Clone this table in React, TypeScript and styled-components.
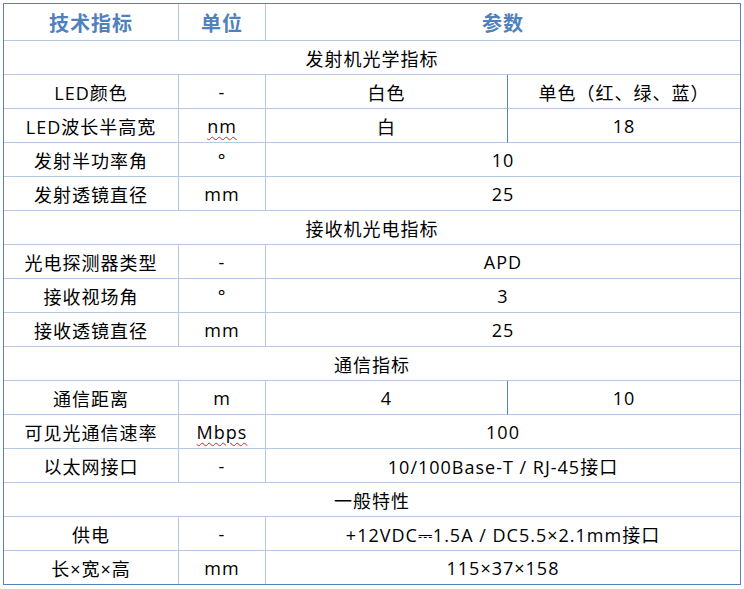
import styled, { createGlobalStyle } from "styled-components"

const GlobalStyle = createGlobalStyle`
  html, body {
    margin: 0;
    padding: 0;
    background: #fff;
  }
`

type Row =
  | { section: string }
  | { name: string; unit: string; values: string[]; spell?: boolean }

const rows: Row[] = [
  { section: "发射机光学指标" },
  { name: "LED颜色", unit: "-", values: ["白色", "单色（红、绿、蓝）"] },
  { name: "LED波长半高宽", unit: "nm", values: ["白", "18"], spell: true },
  { name: "发射半功率角", unit: "°", values: ["10"] },
  { name: "发射透镜直径", unit: "mm", values: ["25"] },
  { section: "接收机光电指标" },
  { name: "光电探测器类型", unit: "-", values: ["APD"] },
  { name: "接收视场角", unit: "°", values: ["3"] },
  { name: "接收透镜直径", unit: "mm", values: ["25"] },
  { section: "通信指标" },
  { name: "通信距离", unit: "m", values: ["4", "10"] },
  { name: "可见光通信速率", unit: "Mbps", values: ["100"], spell: true },
  { name: "以太网接口", unit: "-", values: ["10/100Base-T / RJ-45接口"] },
  { section: "一般特性" },
  { name: "供电", unit: "-", values: ["+12VDC⎓1.5A / DC5.5×2.1mm接口"] },
  { name: "长×宽×高", unit: "mm", values: ["115×37×158"] },
]

export default function App() {
  return (
    <>
      <GlobalStyle />
      <SpecTable>
        <colgroup>
          <col style={{ width: 175 }} />
          <col style={{ width: 87 }} />
          <col style={{ width: 242 }} />
          <col style={{ width: 232 }} />
        </colgroup>
        <thead>
          <tr>
            <HeadCell>技术指标</HeadCell>
            <HeadCell>单位</HeadCell>
            <HeadCell colSpan={2}>参数</HeadCell>
          </tr>
        </thead>
        <tbody>
          {rows.map((row, i) =>
            "section" in row ? (
              <tr key={i}>
                <Cell colSpan={4}>{row.section}</Cell>
              </tr>
            ) : (
              <tr key={i}>
                <Cell>{row.name}</Cell>
                <Cell>{row.spell ? <Misspelt>{row.unit}</Misspelt> : row.unit}</Cell>
                {row.values.length === 2 ? (
                  <>
                    <Cell $split>{row.values[0]}</Cell>
                    <Cell>{row.values[1]}</Cell>
                  </>
                ) : (
                  <Cell colSpan={2}>{row.values[0]}</Cell>
                )}
              </tr>
            )
          )}
        </tbody>
      </SpecTable>
    </>
  )
}

const SpecTable = styled.table`
  width: 738px;
  margin: 3px 0 0 3px;
  table-layout: fixed;
  border-collapse: separate;
  border-spacing: 0;
  border: 1px solid #4f81bd;
  font-family: "Open Sans", "Noto Sans CJK SC", "DejaVu Sans", sans-serif;
  letter-spacing: 1px;
  color: #000;

  tr > *:last-child {
    border-right: none;
  }
  tbody tr:last-child td {
    border-bottom: none;
  }
`

const HeadCell = styled.th`
  height: 36px;
  padding: 0;
  border-right: 1px solid #b4c8e2;
  border-bottom: 1px solid #b4c8e2;
  font-size: 20px;
  font-weight: 700;
  color: #4f81bd;
  text-align: center;
  vertical-align: middle;
`

const Cell = styled.td<{ $split?: boolean }>`
  height: 33px;
  padding: 0;
  border-right: 1px solid ${(p) => (p.$split ? "#4f81bd" : "#b4c8e2")};
  border-bottom: 1px solid #b4c8e2;
  font-size: 18px;
  text-align: center;
  vertical-align: middle;
  white-space: nowrap;
`

const Misspelt = styled.span`
  text-decoration: underline wavy #e02020;
  text-decoration-thickness: 1px;
  text-underline-offset: 3px;
`
